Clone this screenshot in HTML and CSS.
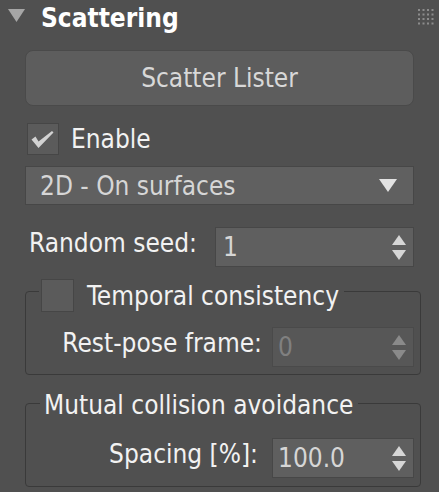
FILE: index.html
```html
<!DOCTYPE html>
<html>
<head>
<meta charset="utf-8">
<link rel="stylesheet" href="styles.css">
</head>
<body>
<div class="header">
  <svg class="caret" width="17" height="13" viewBox="0 0 17 13"><polygon points="0,0 17,0 8.5,13"/></svg>
  <span class="title">Scattering</span>
  <svg class="grip" width="16" height="16" viewBox="0 0 16 16">
    <rect x="0" y="0" width="2" height="2"/><rect x="4.5" y="0" width="2" height="2"/><rect x="9" y="0" width="2" height="2"/><rect x="13.5" y="0" width="2" height="2"/>
    <rect x="0" y="4.5" width="2" height="2"/><rect x="4.5" y="4.5" width="2" height="2"/><rect x="9" y="4.5" width="2" height="2"/><rect x="13.5" y="4.5" width="2" height="2"/>
    <rect x="0" y="9" width="2" height="2"/><rect x="4.5" y="9" width="2" height="2"/><rect x="9" y="9" width="2" height="2"/><rect x="13.5" y="9" width="2" height="2"/>
    <rect x="0" y="13.5" width="2" height="2"/><rect x="4.5" y="13.5" width="2" height="2"/><rect x="9" y="13.5" width="2" height="2"/><rect x="13.5" y="13.5" width="2" height="2"/>
  </svg>
</div>
<div class="content">
  <button class="btn">Scatter Lister</button>
  <div class="check-row">
    <span class="box"><svg class="tick" width="32" height="32" viewBox="0 0 32 32"><path d="M4.5 16.5 L8.5 13.5 L11.5 18.5 L25 8 L26.5 9.5 L11.5 25 Z"/></svg></span>
    <span class="lbl-text">Enable</span>
  </div>
  <div class="dropdown">
    <span>2D - On surfaces</span>
    <svg class="dd-arrow" width="18" height="13" viewBox="0 0 18 13"><polygon points="0,0 18,0 9,13"/></svg>
  </div>
  <div class="seed-row">
    <span class="lbl">Random seed:</span>
    <div class="spinner seed">
      <span>1</span>
      <svg class="arrows" width="14" height="25" viewBox="0 0 14 25"><polygon points="0,10 7,0 14,10"/><polygon points="0,15 14,15 7,25"/></svg>
    </div>
  </div>
  <div class="group g1">
    <div class="legend"><span class="box"></span><span>Temporal consistency</span></div>
    <div class="frow">
      <span class="lbl">Rest-pose frame:</span>
      <div class="spinner disabled">
        <span>0</span>
        <svg class="arrows" width="14" height="25" viewBox="0 0 14 25"><polygon points="0,10 7,0 14,10"/><polygon points="0,15 14,15 7,25"/></svg>
      </div>
    </div>
  </div>
  <div class="group g2">
    <div class="legend"><span>Mutual collision avoidance</span></div>
    <div class="frow">
      <span class="lbl">Spacing [%]:</span>
      <div class="spinner">
        <span>100.0</span>
        <svg class="arrows" width="14" height="25" viewBox="0 0 14 25"><polygon points="0,10 7,0 14,10"/><polygon points="0,15 14,15 7,25"/></svg>
      </div>
    </div>
  </div>
</div>
</body>
</html>
```
FILE: styles.css
```css
* { box-sizing: border-box; }
html, body { margin: 0; background: #505050; }
body {
  width: 439px;
  height: 492px;
  overflow: hidden;
  font-family: "DejaVu Sans Condensed", "DejaVu Sans", sans-serif;
  font-stretch: condensed;
  font-size: 26px;
  color: #f2f2f2;
}
.header { display: flex; align-items: flex-start; height: 35px; }
.caret { margin: 9px 0 0 8px; fill: #a6a6a6; }
.title { margin: 1px 0 0 16px; font-weight: bold; line-height: 34px; color: #ffffff; }
.grip { margin: 9px 5px 0 auto; fill: #8c8c8c; }

.content { display: flex; flex-direction: column; padding: 15px 18px 0 25px; }

.btn {
  display: flex; align-items: center; justify-content: center;
  height: 56px; margin: 0 7px 0 0; padding: 0;
  background: #5d5d5d; border: 1px solid #4a4a4a; border-radius: 8px;
  color: #d8d8d8; font: inherit;
}

.check-row { display: flex; align-items: center; gap: 12px; height: 32px; margin: 17px 0 0 2px; }
.box {
  display: flex; align-items: center; justify-content: center;
  width: 32px; height: 32px; flex: none;
  background: #5b5b5b; border: 1px solid #464646;
}
.tick { fill: #d2d2d2; margin: -1px; }

.dropdown {
  display: flex; align-items: center; justify-content: space-between;
  height: 39px; margin: 11px 7px 0 0; padding: 0 16px 0 14px;
  background: #606060; border: 1px solid #474747; color: #d6d6d6;
}
.dd-arrow { fill: #e2e2e2; }

.seed-row { display: flex; align-items: center; height: 40px; margin: 22px 7px 0 4px; }
.lbl { padding-bottom: 8px; }

.spinner {
  display: flex; align-items: center; justify-content: space-between;
  height: 40px; padding: 0 7px 0 5px;
  background: #5f5f5f; border: 1px solid #474747; color: #d6d6d6;
}
.spinner.seed { width: 199px; margin-left: auto; padding-left: 7px; }
.arrows { fill: #d6d6d6; }
.spinner.disabled { background: #575757; border-color: #4a4a4a; color: #808080; }
.spinner.disabled .arrows { fill: #8a8a8a; }

.group {
  display: flex; flex-direction: column;
  border: 1px solid #3a3a3a; border-radius: 4px;
  padding: 0 6px 7px 0;
}
.legend { display: flex; align-items: center; align-self: flex-start; background: #505050; }
.g1 { margin-top: 24px; }
.g1 .legend { margin: -13px 0 0 13px; padding: 0 5px 0 2px; gap: 13px; height: 33px; }
.g1 .box { width: 33px; height: 33px; }
.g2 { margin-top: 28px; padding-bottom: 8px; }
.g2 .legend { margin: -14px 0 0 14px; padding: 0 5px 0 4px; line-height: 30px; }

.frow { display: flex; align-items: center; justify-content: flex-end; height: 40px; }
.frow .spinner { width: 142px; }
.g1 .frow { margin-top: 15px; gap: 10px; }
.g2 .frow { margin-top: 18px; gap: 14px; }
```
